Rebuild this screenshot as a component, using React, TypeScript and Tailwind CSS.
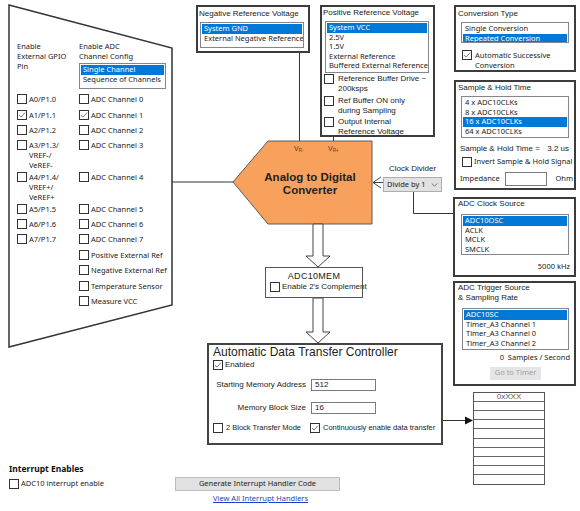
import React from "react";

const seg = "font-['Noto_Sans',sans-serif] text-[7.5px] leading-[9.5px] text-[#1a1a1a]";
const tah = "font-['Liberation_Sans',Arial,sans-serif] text-[8px] leading-[10px] text-[#1a1a1a]";

const Check = ({ checked = false }: { checked?: boolean }) => (
  <span className="flex h-[10px] w-[10px] shrink-0 items-center justify-center border border-[#333] bg-white">
    {checked && (
      <svg viewBox="0 0 10 10" className="h-[8px] w-[8px]">
        <path d="M1.2 5 L3.8 7.6 L8.8 2" fill="none" stroke="#555" strokeWidth="1" />
      </svg>
    )}
  </span>
);

const ListBox = ({ items, selected, className }: { items: string[]; selected: number; className: string }) => (
  <div className={`shrink-0 overflow-hidden border border-[#82878f] bg-white p-px ${seg} ${className}`}>
    {items.map((t, i) => (
      <div
        key={t}
        className={`whitespace-nowrap pl-[2px] ${i === selected ? "bg-[#0078d7] text-white" : ""}`}
      >
        {t}
      </div>
    ))}
  </div>
);

// left column rows: gpio pin label lines + adc channel label
const rows: { gpio?: string[]; gpioOn?: boolean; adc: string; adcOn?: boolean }[] = [
  { gpio: ["A0/P1.0"], adc: "ADC Channel 0" },
  { gpio: ["A1/P1.1"], gpioOn: true, adc: "ADC Channel 1", adcOn: true },
  { gpio: ["A2/P1.2"], adc: "ADC Channel 2" },
  { gpio: ["A3/P1.3/", "VREF-/", "VeREF-"], adc: "ADC Channel 3" },
  { gpio: ["A4/P1.4/", "VREF+/", "VeREF+"], adc: "ADC Channel 4" },
  { gpio: ["A5/P1.5"], adc: "ADC Channel 5" },
  { gpio: ["A6/P1.6"], adc: "ADC Channel 6" },
  { gpio: ["A7/P1.7"], adc: "ADC Channel 7" },
  { adc: "Positive External Ref" },
  { adc: "Negative External Ref" },
  { adc: "Temperature Sensor" },
  { adc: "Measure VCC" },
];

const Diagram = () => (
  <svg className="absolute left-0 top-0" width="580" height="511" viewBox="0 0 580 511">
    <polygon points="9,5 172,48 172,305 9,347" fill="white" stroke="#333" strokeWidth="1.5" />
    <line x1="172" y1="182" x2="233" y2="182" stroke="#333" strokeWidth="1" />
    <line x1="299.5" y1="53" x2="299.5" y2="141" stroke="#333" strokeWidth="1" />
    <line x1="333.5" y1="137" x2="333.5" y2="141" stroke="#333" strokeWidth="1" />
    <polygon points="233,182 268,141 372,141 372,224 268,224" fill="#f7a15c" stroke="#5a5a5a" strokeWidth="1" />
    <polyline points="381,177 373,182.5 381,188" fill="none" stroke="#444" strokeWidth="1" />
    <line x1="373" y1="182.5" x2="383" y2="182.5" stroke="#444" strokeWidth="1" />
    <polyline points="413.5,191 413.5,213.5 453,213.5" fill="none" stroke="#333" strokeWidth="1" />
    <polygon
      points="313,224 323,224 323,256 330,256 318,267 306,256 313,256"
      fill="white"
      stroke="#444"
      strokeWidth="1"
    />
    <polygon
      points="313,298 323,298 323,332 330,332 318,343 306,332 313,332"
      fill="white"
      stroke="#444"
      strokeWidth="1"
    />
    <line x1="443" y1="420.5" x2="466" y2="420.5" stroke="#333" strokeWidth="1" />
    <polygon points="465,416.5 473,420.5 465,424.5" fill="#111" />
  </svg>
);

export default function App() {
  return (
    <div className="relative h-[511px] w-[580px] overflow-hidden bg-white">
      <Diagram />

      {/* left input selection */}
      <div className={`absolute left-[17px] top-[41px] w-[62px] ${seg} leading-[10px]`}>
        Enable
        <br />
        External GPIO
        <br />
        Pin
      </div>
      <div className={`absolute left-[79px] top-[41px] w-[90px] ${seg} leading-[10px]`}>
        Enable ADC
        <br />
        Channel Config
      </div>
      <ListBox
        items={["Single Channel", "Sequence of Channels"]}
        selected={0}
        className="absolute left-[79px] top-[63px] h-[26px] w-[87px]"
      />
      <div
        className={`absolute left-[17px] top-[94px] grid grid-cols-[62px_92px] grid-rows-[16px_15px_15px_32px_32px_15px_15px_16px_15px_16px_15px_15px] ${seg} leading-[10px]`}
      >
        {rows.map((r, i) => (
          <React.Fragment key={r.adc}>
            <div className="col-start-1 flex items-start gap-[2px]" style={{ gridRow: i + 1 }}>
              {r.gpio && (
                <>
                  <Check checked={r.gpioOn} />
                  <div>
                    {r.gpio.map((l) => (
                      <div key={l}>{l}</div>
                    ))}
                  </div>
                </>
              )}
            </div>
            <div className="col-start-2 flex items-start gap-[2px] whitespace-nowrap" style={{ gridRow: i + 1 }}>
              <Check checked={r.adcOn} />
              <span>{r.adc}</span>
            </div>
          </React.Fragment>
        ))}
      </div>

      {/* negative reference */}
      <div className="absolute left-[196px] top-[5px] flex h-[48px] w-[114px] flex-col border-2 border-[#3c3c3c] bg-white px-[1px] pt-[2px]">
        <div className={`${tah} whitespace-nowrap`}>Negative Reference Voltage</div>
        <ListBox
          items={["System GND", "External Negative Reference"]}
          selected={0}
          className="ml-[1px] mt-[3px] h-[26px] w-[104px]"
        />
      </div>

      {/* positive reference */}
      <div className="absolute left-[320px] top-[5px] flex h-[132px] w-[115px] flex-col border-2 border-[#3c3c3c] bg-white px-[1px] pt-[1px]">
        <div className={`${tah} whitespace-nowrap`}>Positive Reference Voltage</div>
        <ListBox
          items={["System VCC", "2.5V", "1.5V", "External Reference", "Buffered External Reference"]}
          selected={0}
          className="ml-[2px] mt-[3px] h-[52px] w-[104px]"
        />
        <div className={`mt-[1px] flex flex-col gap-[1.5px] ${tah} leading-[9.5px]`}>
          {[
            ["Reference Buffer Drive ~", "200ksps"],
            ["Ref Buffer ON only", "during Sampling"],
            ["Output Internal", "Reference Voltage"],
          ].map(([a, b]) => (
            <div key={a} className="flex items-start gap-[4px] pl-[1px]">
              <Check />
              <div>
                {a}
                <br />
                {b}
              </div>
            </div>
          ))}
        </div>
      </div>

      {/* conversion type */}
      <div className="absolute left-[454px] top-[5px] flex h-[67px] w-[122px] flex-col border-2 border-[#3c3c3c] bg-white px-[1px] pt-[2px]">
        <div className={`${tah} pl-[1px]`}>Conversion Type</div>
        <ListBox
          items={["Single Conversion", "Repeated Conversion"]}
          selected={1}
          className="ml-[4px] mt-[3px] h-[21px] w-[108px]"
        />
        <div className={`ml-[5px] mt-[7px] flex items-start gap-[3px] ${seg} leading-[10px]`}>
          <Check checked />
          <div>
            Automatic Successive
            <br />
            Conversion
          </div>
        </div>
      </div>

      {/* sample and hold */}
      <div className="absolute left-[454px] top-[80px] flex h-[110px] w-[122px] flex-col border-2 border-[#3c3c3c] bg-white px-[1px] pt-[1px]">
        <div className={`${tah} pl-[1px]`}>Sample &amp; Hold Time</div>
        <ListBox
          items={["4 x ADC10CLKs", "8 x ADC10CLKs", "16 x ADC10CLKs", "64 x ADC10CLKs"]}
          selected={2}
          className="ml-[4px] mt-[3px] h-[42px] w-[108px]"
        />
        <div className={`mt-[6px] flex justify-between pl-[3px] pr-[4px] ${tah}`}>
          <span>Sample &amp; Hold Time =</span>
          <span>3.2 us</span>
        </div>
        <div className={`ml-[5px] mt-[3px] flex items-center gap-[2px] ${seg}`}>
          <Check />
          <span>Invert Sample &amp; Hold Signal</span>
        </div>
        <div className={`mt-[5px] flex items-center pl-[3px] ${seg}`}>
          <span className="w-[46px]">Impedance</span>
          <span className="h-[14px] w-[44px] border border-[#7a7a7a] bg-white" />
          <span className="ml-[8px]">Ohm</span>
        </div>
      </div>

      {/* clock divider */}
      <div className={`absolute left-[389px] top-[164px] ${tah}`}>Clock Divider</div>
      <div
        className={`absolute left-[383px] top-[177px] flex h-[15px] w-[59px] items-center justify-between border border-[#adadad] bg-[#e1e1e1] pl-[3px] pr-[3px] ${seg}`}
      >
        <span>Divide by 1</span>
        <svg viewBox="0 0 8 5" className="h-[4px] w-[7px]">
          <polyline points="0.5,0.5 4,4 7.5,0.5" fill="none" stroke="#555" strokeWidth="1" />
        </svg>
      </div>

      {/* ADC clock source */}
      <div className="absolute left-[453px] top-[197px] flex h-[80px] w-[123px] flex-col border-2 border-[#3c3c3c] bg-white px-[1px] pt-0">
        <div className={`${tah} pl-[2px]`}>ADC Clock Source</div>
        <ListBox
          items={["ADC10OSC", "ACLK", "MCLK", "SMCLK"]}
          selected={0}
          className="ml-[5px] mt-[5px] h-[41px] w-[108px]"
        />
        <div className={`mt-[7px] pr-[3px] text-right ${seg}`}>5000 kHz</div>
      </div>

      {/* ADC trigger source */}
      <div className="absolute left-[453px] top-[281px] flex h-[105px] w-[123px] flex-col border-2 border-[#3c3c3c] bg-white px-[1px] pt-0">
        <div className={`${tah} pl-[2px]`}>
          ADC Trigger Source
          <br />
          &amp; Sampling Rate
        </div>
        <ListBox
          items={["ADC10SC", "Timer_A3 Channel 1", "Timer_A3 Channel 0", "Timer_A3 Channel 2"]}
          selected={0}
          className="ml-[6px] mt-[5px] h-[42px] w-[107px]"
        />
        <div className={`mt-[3px] pr-[3px] text-right ${seg}`}>0&nbsp;&nbsp;Samples / Second</div>
        <div
          className={`ml-[34px] mt-[4px] flex h-[13px] w-[51px] items-center justify-center bg-[#e5e5e5] ${seg} text-[#a0a0a0]`}
        >
          Go to Timer
        </div>
      </div>

      {/* ADC block text */}
      <div className="absolute left-[294px] top-[144px] font-['Liberation_Sans',Arial,sans-serif] text-[7px] leading-[9px] text-[#5b3a1c]">
        V<sub className="text-[4.5px]">R-</sub>
      </div>
      <div className="absolute left-[328px] top-[144px] font-['Liberation_Sans',Arial,sans-serif] text-[7px] leading-[9px] text-[#5b3a1c]">
        V<sub className="text-[4.5px]">R+</sub>
      </div>
      <div className="absolute left-[250px] top-[171px] w-[120px] text-center font-['Liberation_Sans',Arial,sans-serif] text-[11.5px] font-bold leading-[13px] text-[#222]">
        Analog to Digital
        <br />
        Converter
      </div>

      {/* ADC10MEM */}
      <div className="absolute left-[265px] top-[267px] flex h-[31px] w-[98px] flex-col border border-[#555] bg-white pt-[3px]">
        <div className={`${tah} text-center text-[9px] tracking-[0.3px]`}>ADC10MEM</div>
        <div className={`ml-[4px] mt-px flex items-center gap-[2px] whitespace-nowrap ${tah} text-[7px]`}>
          <Check />
          <span>Enable 2's Complement</span>
        </div>
      </div>

      {/* data transfer controller */}
      <div className="absolute left-[207px] top-[343px] flex h-[102px] w-[236px] flex-col border-2 border-[#444] bg-white px-[4px]">
        <div className="font-['Liberation_Sans',Arial,sans-serif] text-[12px] leading-[14px] text-[#222]">
          Automatic Data Transfer Controller
        </div>
        <div className={`mt-[1px] flex items-center gap-[2px] ${tah}`}>
          <Check checked />
          <span>Enabled</span>
        </div>
        <div className={`mt-[9px] flex items-center ${tah}`}>
          <span className="w-[93px] text-right">Starting Memory Address</span>
          <span className="ml-[5px] flex h-[12px] w-[65px] items-center border border-[#7a7a7a] pl-[3px]">512</span>
        </div>
        <div className={`mt-[11px] flex items-center ${tah}`}>
          <span className="w-[93px] text-right">Memory Block Size</span>
          <span className="ml-[5px] flex h-[12px] w-[65px] items-center border border-[#7a7a7a] pl-[3px]">16</span>
        </div>
        <div className={`mt-[9px] flex items-center whitespace-nowrap ${tah}`}>
          <Check />
          <span className="ml-[3px] w-[84px] text-[7.5px]">2 Block Transfer Mode</span>
          <Check checked />
          <span className="ml-[3px] text-[7.5px]">Continuously enable data transfer</span>
        </div>
      </div>

      {/* memory table */}
      <div className="absolute left-[473px] top-[392px] flex h-[93px] w-[72px] flex-col border border-[#555] bg-white">
        {Array.from({ length: 10 }).map((_, i) => (
          <div
            key={i}
            className={`flex h-[9.2px] items-center justify-center border-b border-[#666] last:border-b-0 ${tah} text-[7.5px] text-[#555]`}
          >
            {i === 0 ? "0xXXX" : ""}
          </div>
        ))}
      </div>

      {/* interrupts */}
      <div className="absolute left-[9px] top-[463px] font-['Noto_Sans',sans-serif] text-[8.5px] font-bold leading-[12px] text-[#111]">
        Interrupt Enables
      </div>
      <div className={`absolute left-[9px] top-[479px] flex items-center gap-[2px] ${seg}`}>
        <Check />
        <span>ADC10 interrupt enable</span>
      </div>
      <div
        className={`absolute left-[175px] top-[477px] flex h-[14px] w-[165px] items-center justify-center border border-[#bcbcbc] bg-[#e1e1e1] ${seg}`}
      >
        Generate Interrupt Handler Code
      </div>
      <div className={`absolute left-[213px] top-[494px] ${seg} text-[#1f3fc6] underline`}>
        View All Interrupt Handlers
      </div>
    </div>
  );
}
